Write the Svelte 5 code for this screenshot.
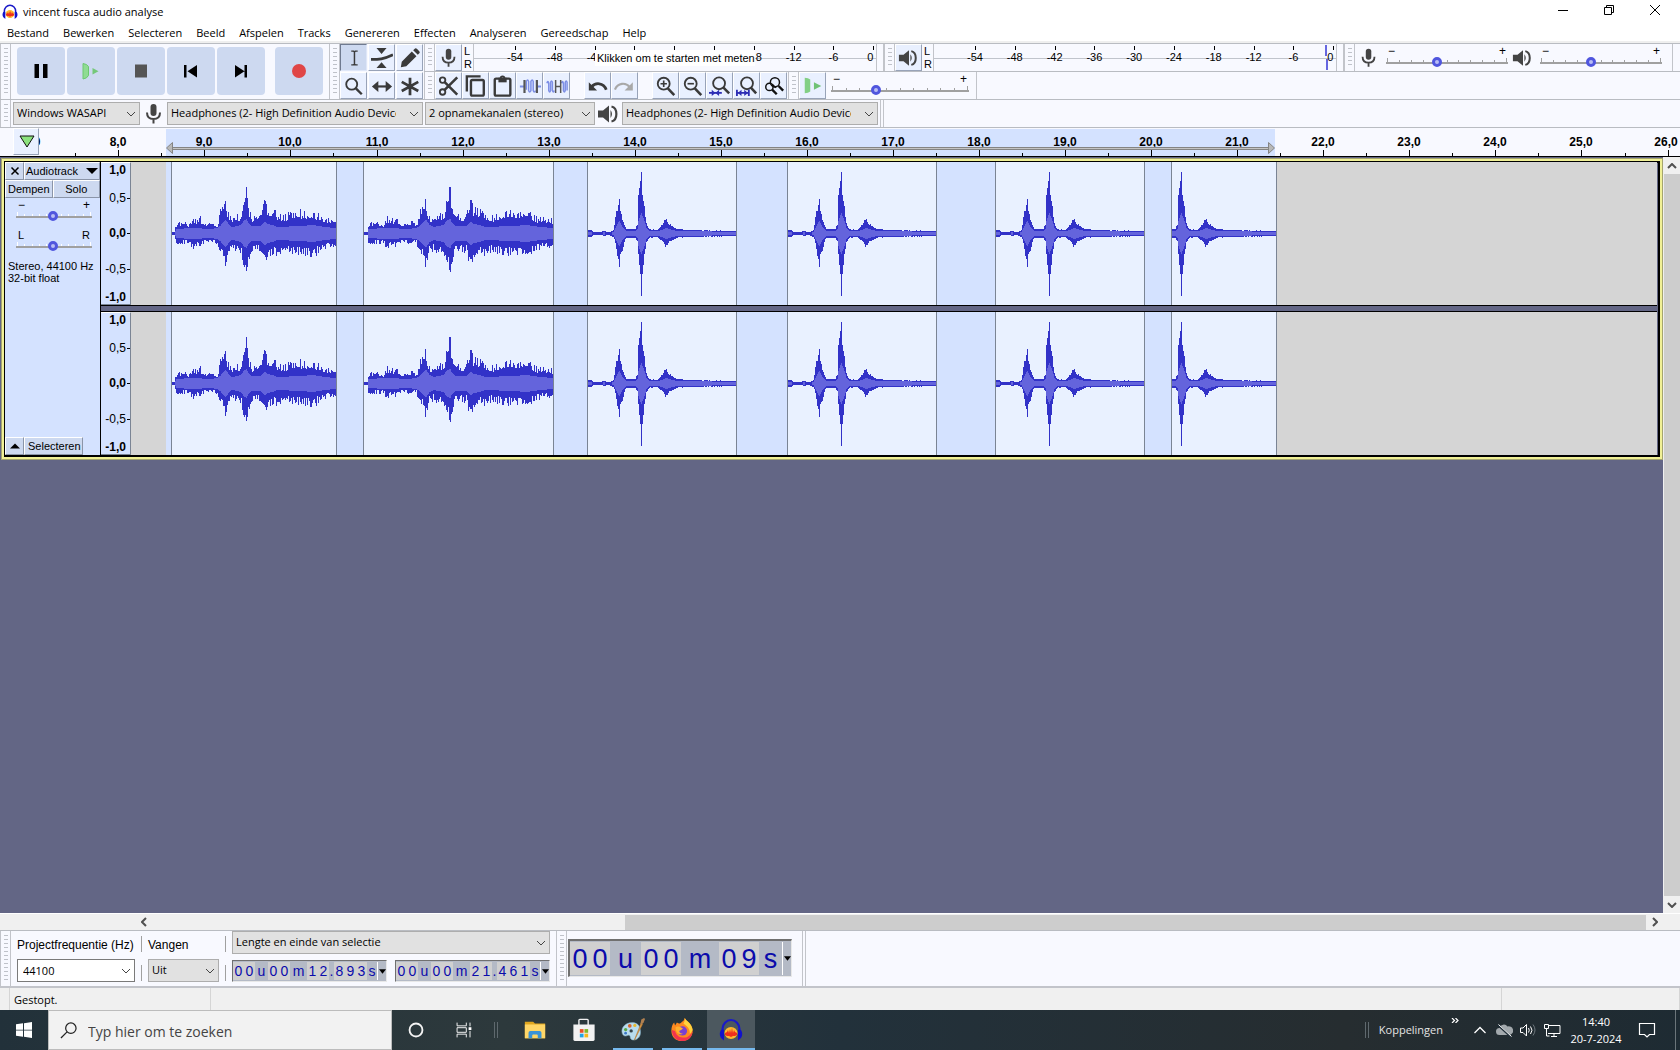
<script>
  const menus = ['Bestand', 'Bewerken', 'Selecteren', 'Beeld', 'Afspelen', 'Tracks', 'Genereren', 'Effecten', 'Analyseren', 'Gereedschap', 'Help'];

  const tools = [
    ['Selectie', 'ibeam'], ['Envelop', 'envelope'], ['Tekenen', 'pencil'],
    ['Zoomen', 'lens'], ['Verschuiven', 'shift'], ['Multi', 'star']
  ];
  const editGroups = [
    [['Knippen', 'cut'], ['Kopiëren', 'copy'], ['Plakken', 'paste'], ['Bijsnijden', 'trim'], ['Stilte', 'silence']],
    [['Ongedaan maken', 'undo'], ['Opnieuw', 'redo']],
    [['Inzoomen', 'zoomin'], ['Uitzoomen', 'zoomout'], ['Selectie passend', 'fitsel'], ['Project passend', 'fitproj'], ['Zoom wisselen', 'toggle']]
  ];
  const transport = [['Pauze', 'pause'], ['Afspelen', 'play'], ['Stop', 'stop'], ['Naar begin', 'start'], ['Naar einde', 'end'], ['Opnemen', 'record']];

  const playLabels = ['-54', '-48', '-42', '-36', '-30', '-24', '-18', '-12', '-6', '0'];
  // Labels behind the hint are left out; those at its edges show only in part
  const recordLabels = ['-54', '-48', '-4', '', '', '', '8', '-12', '-6', '0'];
  const shift = { '-4': -3, '8': 5, '0': -3 };

  // Time axis: pixels per second and the x of 8,0 s relative to the ruler's left edge
  const perSecond = 86.07;
  const at = (s) => Math.round(79.3 + (s - 8) * perSecond);
  const seconds = Array.from({ length: 20 }, (_, i) => i + 7);
  const fmt = (n) => n.toFixed(1).replace('.', ',');

  // Envelope points: x, peak up, peak down, rms
  const music = [
    [0, 1, 1, 0], [4, 1, 1, 0], [5, 7, 7, 4], [8, 9, 9, 4], [20, 8, 8, 5], [24, 14, 13, 5], [28, 11, 10, 5], [33, 14, 12, 5],
    [38, 8, 8, 4], [45, 11, 8, 4], [53, 8, 8, 5], [56, 18, 16, 7], [59, 24, 20, 10], [61, 29, 26, 12], [62, 34, 33, 13], [63, 24, 28, 13],
    [66, 16, 17, 8], [70, 15, 14, 6], [76, 18, 16, 7], [80, 15, 16, 8], [83, 30, 30, 12], [85, 32, 28, 13], [86, 46, 36, 14], [87, 46, 38, 14],
    [88, 24, 28, 11], [92, 15, 16, 7], [103, 16, 15, 7], [105, 22, 24, 9], [107, 33, 25, 11], [108, 33, 25, 11], [110, 21, 24, 9], [116, 21, 17, 8],
    [122, 18, 19, 6], [128, 14, 15, 6], [143, 21, 18, 7], [150, 18, 17, 7], [163, 20, 20, 8], [170, 16, 16, 7], [176, 13, 13, 6], [190, 13, 12, 5]
  ];
  const knock = [
    [0, 3, 3, 1], [4, 3, 3, 1], [6, 1, 1, 0], [14, 1, 1, 0], [16, 2, 2, 1], [22, 1, 1, 0], [26, 3, 3, 1], [28, 15, 9, 5], [30, 24, 22, 9],
    [32, 34, 33, 12], [33, 22, 22, 10], [35, 15, 19, 6], [37, 8, 8, 4], [39, 4, 4, 2], [48, 4, 4, 2], [50, 8, 8, 4], [51, 38, 22, 12],
    [53, 52, 40, 18], [54, 61, 62, 20], [55, 38, 40, 17], [57, 25, 21, 12], [59, 10, 9, 5], [62, 4, 4, 2], [70, 3, 3, 2], [75, 9, 7, 3],
    [78, 14, 12, 5], [82, 9, 8, 4], [89, 4, 4, 2], [100, 3, 3, 2], [149, 2, 2, 1]
  ];
  const clips = [
    { x: 40, w: 165, shape: music, scale: 190 / 165, from: 0, noise: 0.55 },
    { x: 232, w: 190, shape: music, scale: 1, from: 0, noise: 0.55 },
    { x: 456, w: 149, shape: knock, scale: 1, from: 0, noise: 0.25 },
    { x: 656, w: 149, shape: knock, scale: 1, from: 0, noise: 0.25 },
    { x: 864, w: 149, shape: knock, scale: 1, from: 0, noise: 0.25 },
    { x: 1040, w: 105, shape: knock, scale: 1, from: 44, noise: 0.25 }
  ];

  function sample(shape, x) {
    let i = 1;
    while (i < shape.length - 1 && shape[i][0] < x) i++;
    const a = shape[i - 1], b = shape[i];
    const t = Math.max(0, Math.min(1, (x - a[0]) / (b[0] - a[0])));
    return [1, 2, 3].map((k) => a[k] + (b[k] - a[k]) * t);
  }
  const hash = (n) => {
    const v = Math.sin(n * 127.1 + 11.7) * 43758.5453;
    return v - Math.floor(v);
  };
  function bars(clip, rms) {
    const mid = 71;
    let d = '';
    for (let i = 0; i < clip.w; i++) {
      const x = i + clip.from;
      const [up, down, r] = sample(clip.shape, x * clip.scale);
      const jitter = (v, seed) => (v > 30 ? v : v + (hash(seed) ** 1.5 - 0.5) * clip.noise * Math.min(v, 18));
      const top = Math.round(rms ? r : jitter(up, x));
      const low = Math.round(rms ? r : jitter(down, x + 500));
      if (rms && r < 0.7) continue;
      d += `M${clip.x + i} ${mid - top}h1v${top + low + 1}h-1z`;
    }
    return d;
  }
  const waves = clips.map((c) => ({ ...c, peak: bars(c, false), rms: bars(c, true) }));

  const levels = [['1,0', true], ['0,5', false], ['0,0', true], ['-0,5', false], ['-1,0', true]];
</script>

{#snippet logo()}
  <svg class="logo" viewBox="0 0 24 24" aria-hidden="true">
    <ellipse cx="12" cy="15" rx="6.500" ry="6" fill="#ffb92e" />
    <path d="M6 15l2-1 1-2 1 3 1-4 1 4 1-5 1 5 1-3 1 2 2 1v2l-2 1-2 0-2 1-2-1-2 0-2-1z" fill="#f0301c" />
    <path d="M3.500 15V11a8.500 9 0 0 1 17 0v4" fill="none" stroke="#1a1ac8" stroke-width="2.200" />
    <path d="M2 12q-2.500 4 0 8l3 2.500v-11zM22 12q2.500 4 0 8l-3 2.500v-11z" fill="#1212cc" />
  </svg>
{/snippet}

{#snippet mic()}
  <svg class="glyph" viewBox="0 0 24 24" aria-hidden="true">
    <rect x="8.500" y="2" width="6" height="12" rx="3" fill="#444" />
    <path d="M5 10.500c0 4.500 3 6.500 6.500 6.500s6.500-2 6.500-6.500M11.500 17v4.500" fill="none" stroke="#444" stroke-width="2" />
  </svg>
{/snippet}

{#snippet speaker()}
  <svg class="glyph" viewBox="0 0 24 24" aria-hidden="true">
    <path d="M1 8.500h5l6-5v17l-6-5H1z" fill="#444" />
    <path d="M13.500 8q3 4 0 8z" fill="#444" />
    <path d="M14.500 4.500c6.500 1.500 6.500 13.500 0 15" fill="none" stroke="#444" stroke-width="2.200" />
  </svg>
{/snippet}

{#snippet icon(name)}
  <svg class="glyph" viewBox="0 0 24 24" aria-hidden="true" fill="none" stroke="#3a3a3a" stroke-width="2">
    {#if name === 'ibeam'}
      <path d="M9 4.500h2.500l1 .8 1-.8H16M12.500 5v14M9 19.500h2.500l1-.8 1 .8H16" stroke-width="1.600" />
    {:else if name === 'envelope'}
      <path d="M6 1h11l-5.500 6.500zM6 23h11l-5.500-6.500z" fill="#3a3a3a" stroke="none" />
      <path d="M0 13.500c8 0 14 0 24-5" stroke-width="3" />
    {:else if name === 'pencil'}
      <path d="M2 22l1-6L14 5l5 5L8 21zM15.500 3.500l2-2q1-.6 2 .4l2.600 2.600q1 1 .3 2L20.500 8.500z" fill="#3a3a3a" stroke="none" />
    {:else if name === 'lens'}
      <circle cx="9.500" cy="10" r="6" /><path d="M14 14.500L20.500 21" stroke-width="2.600" />
    {:else if name === 'shift'}
      <path d="M5 12.500h14" stroke-width="2.400" /><path d="M1 12.500l7-6v12zM23 12.500L16 6.500v12z" fill="#3a3a3a" stroke="none" />
    {:else if name === 'star'}
      <path d="M12 3v19M3 7.500l18 10M21 7.500l-18 10" stroke-width="3" />
    {:else if name === 'cut'}
      <circle cx="5" cy="5.500" r="3" /><circle cx="5" cy="18.500" r="3" /><path d="M7 7.500L21 21.500M7 16.500L21 2.500" stroke-width="2.800" />
    {:else if name === 'copy'}
      <rect x="6.500" y="5.500" width="14" height="17" rx="1.500" stroke-width="2.600" /><path d="M2 18V1.500h15" stroke-width="2.600" />
    {:else if name === 'paste'}
      <rect x="3" y="4" width="17" height="18.500" rx="1.500" stroke-width="2.600" /><path d="M7 3h9v5H7z" fill="#3a3a3a" stroke="none" /><circle cx="11.500" cy="3.500" r="2" />
    {:else if name === 'trim'}
      <path d="M1 12.500h5M20 12.500h4" stroke="#7d8fe6" /><path d="M8 16V7q1.500-3 2.500 0v10q1 3 2.500 0V7q1.500-3 2.500 0v10q1 3 2.500 0" stroke="#7d8fe6" stroke-width="1.600" /><path d="M6 5.500v14M19.500 5.500v14" stroke="#555" stroke-width="2.400" />
    {:else if name === 'silence'}
      <path d="M1 9q1-4 2 0v8q1 3 2 0V8q1-3 2 0v9q1 3 2 0M17 9q1-4 2 0v8q1 3 2 0V8q1-3 2 0v9" stroke="#7d8fe6" stroke-width="1.600" /><path d="M10.500 5.500v14M16 5.500v14M10.500 12.500h5.500" stroke="#555" stroke-width="1.600" />
    {:else if name === 'undo'}
      <path d="M5 13c4-5 13-5 16 3" stroke-width="3" /><path d="M2 8v9h9z" fill="#3a3a3a" stroke="none" />
    {:else if name === 'redo'}
      <path d="M17 13c-4-5-13-5-16 3" stroke="#a8a8a8" stroke-width="2.400" /><path d="M20.500 8v9h-9z" fill="#a8a8a8" stroke="none" />
    {:else if name === 'zoomin'}
      <circle cx="9.500" cy="9.500" r="6.500" /><path d="M14 14.500L21 22" stroke-width="2.800" /><path d="M6 9.500h7M9.500 6v7" stroke-width="1.800" />
    {:else if name === 'zoomout'}
      <circle cx="9.500" cy="9.500" r="6.500" /><path d="M14 14.500L21 22" stroke-width="2.800" /><path d="M6 9.500h7" stroke-width="1.800" />
    {:else if name === 'fitsel'}
      <circle cx="11" cy="9" r="6.500" /><path d="M15.500 13.500L22 20" stroke-width="2.800" /><path d="M0 19.500h14" stroke="#2d2db4" /><path d="M7 19.500L3 16v7zM7 19.500l4-3.500v7z" fill="#2d2db4" stroke="none" />
    {:else if name === 'fitproj'}
      <circle cx="12" cy="9" r="6.500" /><path d="M16 13.500L22 20" stroke-width="2.800" /><path d="M1 16v7M14 16v7M2 19.500h11" stroke="#2d2db4" /><path d="M2 19.500L6 16v7zM13 19.500L9 16v7z" fill="#2d2db4" stroke="none" />
    {:else if name === 'toggle'}
      <g stroke="#111" stroke-width="1.600"><circle cx="7" cy="13" r="4" /><circle cx="13" cy="8" r="5" /><path d="M10 16l5 5M17 12l5 5" stroke-width="2.600" /><path d="M10 10l4 4" /></g>
    {:else if name === 'smallplay'}
      <path d="M3 3q4 0 6 2v13q-2 2-6 2z" fill="#82cf85" stroke="none" /><path d="M13 8l8 4-8 4z" fill="#6fc274" stroke="none" />
    {:else if name === 'pause'}
      <path d="M5.500 5h4.500v14H5.500zM14 5h4.500v14H14z" fill="#000" stroke="none" />
    {:else if name === 'play'}
      <path d="M4 4.500q4 .5 5.500 3v9q-1.500 3-5.500 3.500z" fill="#8fdc92" stroke="#6cc870" stroke-width="1" /><path d="M13.500 9l6 3.300-6 3.300z" fill="#74c878" stroke="none" />
    {:else if name === 'stop'}
      <path d="M6 5.500h12v13H6z" fill="#555" stroke="none" />
    {:else if name === 'start'}
      <path d="M5 6h2.500v12.500H5zM18 6v12.500L8.500 12.200z" fill="#000" stroke="none" />
    {:else if name === 'end'}
      <path d="M15.500 6H18v12.500h-2.500zM6 6v12.500l9.500-6.300z" fill="#000" stroke="none" />
    {:else if name === 'record'}
      <circle cx="12" cy="12" r="7" fill="#e04646" stroke="none" />
    {/if}
  </svg>
{/snippet}

{#snippet grab()}<span class="grab"><i></i></span>{/snippet}

{#snippet slider(label, lo, hi, width, value, extra)}
  <label class="slider {extra}" style:width="{width}px" aria-label={label}>
    <span class="ends"><b>{lo}</b><b>{hi}</b></span>
    <svg class="ticks" {width} height="12" aria-hidden="true">
      <rect x="0" y="6" {width} height="2" fill="#a0a0a0" />
      {#each Array(11) as _, i}
        <rect x={Math.round(1 + (i * (width - 3)) / 10)} y={i % 10 ? 4 : 2} width="1" height={i % 10 ? 2 : 4} class="tick" />
      {/each}
    </svg>
    <input type="range" min="0" max="100" {value} aria-label={label} />
  </label>
{/snippet}

{#snippet meter(label, labels, hint, mark)}
  <span class="lr"><span>L</span><span>R</span></span>
  <div class="meter" aria-label={label}>
    <svg width="403" height="27">
      <path d="M0 14.500H403" stroke="#c0c4cc" />
      {#each labels as db, i}
        <rect x={Math.round(41 + i * 39.8)} y="2" width="1" height="4" fill="#000" />
        {#if db}<text x={41 + (shift[db] ?? 0) + i * 39.8} y="17" text-anchor="middle">{db}</text>{/if}
      {/each}
      {#if mark}
        <rect x="391" y="1" width="2" height="11" fill="#6666e0" /><rect x="392" y="15" width="2" height="11" fill="#6666e0" />
      {/if}
    </svg>
    {#if hint}<button class="hint">{hint}</button>{/if}
  </div>
  <span class="tail"></span>
{/snippet}

{#snippet drop(label, text, cls)}
  <span class="drop {cls}">
    <select aria-label={label}><option>{text}</option></select>
    <svg viewBox="0 0 10 6" aria-hidden="true"><path d="M1 1l4 4 4-4" fill="none" stroke="#444" /></svg>
  </span>
{/snippet}

{#snippet time(label, groups, cls)}
  <div class="time {cls}" role="group" aria-label={label}>
    {#each groups as g}
      {#if g.length > 1}
        <span class="digits">{#each g as d}<span>{d}</span>{/each}</span>
      {:else}
        <span class="unit unit-{g === '.' ? 'dot' : g}">{g}</span>
      {/if}
    {/each}
    <button aria-label="Notatie"><svg viewBox="0 0 8 5" aria-hidden="true"><path d="M0 0h8L4 5z" /></svg></button>
  </div>
{/snippet}

<div class="app">
  <header class="title">
    {@render logo()}
    <span class="name">vincent fusca audio analyse</span>
    <button aria-label="Minimaliseren"><svg viewBox="0 0 12 12"><path d="M1 6.500h10" /></svg></button>
    <button aria-label="Verkleinen"><svg viewBox="0 0 12 12"><path d="M1.500 3.500h7v7h-7zM3.500 3V1.500h7v7H9" /></svg></button>
    <button aria-label="Sluiten"><svg viewBox="0 0 12 12"><path d="M1 1l10 10M11 1L1 11" /></svg></button>
  </header>
  <nav class="menu">{#each menus as m}<button>{m}</button>{/each}</nav>

  <div class="dock">
    <section class="transport">
      {@render grab()}
      <div class="big">
        {#each transport as [label, name]}<button class={name} aria-label={label}>{@render icon(name)}</button>{/each}
      </div>
    </section>
    <section class="tools">
      {@render grab()}
      <div class="toolgrid">
        {#each tools as [label, name], i}<button class="tool" class:on={i === 0} aria-label={label}>{@render icon(name)}</button>{/each}
      </div>
    </section>
    <div class="rows">
      <div class="row">
        <section class="bar">
          {@render grab()}
          <button class="tool" aria-label="Opnameniveau">{@render mic()}</button>
          {@render meter('Opnamemeter', recordLabels, 'Klikken om te starten met meten', false)}
        </section>
        <section class="bar">
          {@render grab()}
          <button class="tool" aria-label="Afspeelniveau">{@render speaker()}</button>
          {@render meter('Afspeelmeter', playLabels, '', true)}
        </section>
        <section class="bar mixer">
          {@render grab()}
          {@render mic()}
          {@render slider('Opnamevolume', '−', '+', 122, 41, '')}
          {@render speaker()}
          {@render slider('Afspeelvolume', '−', '+', 122, 41, '')}
        </section>
      </div>
      <div class="row">
        <section class="bar edit">
          {@render grab()}
          {#each editGroups as group}
            <div class="group">
              {#each group as [label, name]}<button class="tool" aria-label={label}>{@render icon(name)}</button>{/each}
            </div>
          {/each}
        </section>
        <section class="bar speed">
          {@render grab()}
          <button class="tool" aria-label="Afspelen op snelheid">{@render icon('smallplay')}</button>
          {@render slider('Afspeelsnelheid', '−', '+', 138, 31, '')}
        </section>
      </div>
    </div>
  </div>

  <div class="row devices">
    {@render grab()}
    {@render drop('Audiohost', 'Windows WASAPI', 'host')}
    {@render mic()}
    {@render drop('Opnameapparaat', 'Headphones (2- High Definition Audio Device)', 'device')}
    {@render drop('Opnamekanalen', '2 opnamekanalen (stereo)', 'channels')}
    {@render speaker()}
    {@render drop('Afspeelapparaat', 'Headphones (2- High Definition Audio Device)', 'device')}
    <span class="tail short"></span>
  </div>

  <div class="timeline">
    <button class="pin" aria-label="Vastgezette kop">
      <svg viewBox="0 0 16 13" aria-hidden="true"><path d="M1 1h14L8 12z" fill="#8be27e" stroke="#111" /></svg>
    </button>
    <svg class="ruler" height="28">
      <rect x="127" y="1" width="1109" height="27" fill="#d4e2ff" />
      {#each seconds as s}
        <rect x={at(s)} y="22" width="1" height="6" />
        <rect x={at(s + 0.5)} y="25" width="1" height="3" />
        <text x={s === 26 ? at(s) - 2 : at(s)} y="18" text-anchor="middle">{fmt(s)}</text>
      {/each}
      <path d="M132 19.500H1231M132 21.500H1231" stroke="#848484" />
      <path d="M132 20.500H1231" stroke="#c4c4c4" />
      <path d="M133.500 14.500v11l-6-5.500zM1229.500 14.500v11l6-5.500z" fill="#b8b8b8" stroke="#848484" />
    </svg>
  </div>

  <main class="workspace">
    <div class="canvas">
      <article class="track">
        <aside class="panel">
          <div class="pair head">
            <button class="x" aria-label="Track sluiten"><svg viewBox="0 0 10 10"><path d="M1.500 1.500l7 7M8.500 1.500l-7 7" /></svg></button>
            <button class="trackname">Audiotrack <svg viewBox="0 0 12 6" aria-hidden="true"><path d="M0 0h12L6 6z" /></svg></button>
          </div>
          <div class="pair mute"><button>Dempen</button><button>Solo</button></div>
          {@render slider('Versterking', '−', '+', 76, 48, 'light')}
          {@render slider('Balans', 'L', 'R', 76, 48, 'light pan')}
          <p>Stereo, 44100 Hz<br />32-bit float</p>
          <div class="foot">
            <button class="x" aria-label="Inklappen"><svg viewBox="0 0 12 6"><path d="M0 6h12L6 0z" class="solid" /></svg></button>
            <button class="select">Selecteren</button>
          </div>
        </aside>
        <div class="channels2">
          {#each [0, 1] as ch}
            <div class="channel">
              <div class="scale">{#each levels as [t, strong]}<span class:strong>{t}</span>{/each}</div>
              <svg class="wave" height="143" shape-rendering="crispEdges" aria-label="Golfvorm kanaal {ch + 1}">
                <rect x="35" y="0" width="1110" height="143" fill="#d4e2ff" />
                {#each waves as c}
                  <rect x={c.x} y="0" width={c.w + 1} height="143" fill="#e9f1ff" />
                  <path d={c.peak} fill="#3232c8" />
                  <path d={c.rms} fill="#6464dc" />
                  <rect x={c.x} y="0" width="1" height="143" fill="#7a8494" />
                  <rect x={c.x + c.w} y="0" width="1" height="143" fill="#7a8494" />
                {/each}
              </svg>
            </div>
          {/each}
        </div>
      </article>
    </div>
    <div class="vscroll">
      <button aria-label="Omhoog"><svg viewBox="0 0 10 6"><path d="M1 5l4-4 4 4" /></svg></button>
      <span class="thumb"></span>
      <button aria-label="Omlaag"><svg viewBox="0 0 10 6"><path d="M1 1l4 4 4-4" /></svg></button>
    </div>
  </main>
  <div class="hscroll">
    <button aria-label="Naar links"><svg viewBox="0 0 6 10"><path d="M5 1L1 5l4 4" /></svg></button>
    <span class="space"></span><span class="thumb"></span>
    <button aria-label="Naar rechts"><svg viewBox="0 0 6 10"><path d="M1 1l4 4-4 4" /></svg></button>
  </div>

  <div class="bottom">
    <section class="selection">
      {@render grab()}
      <div class="cols">
        <div class="col rate">
          <label for="rate">Projectfrequentie (Hz)</label>
          <span class="drop combo"><input id="rate" value="44100" /><svg viewBox="0 0 10 6" aria-hidden="true"><path d="M1 1l4 4 4-4" fill="none" stroke="#444" /></svg></span>
        </div>
        <div class="col seps"><i></i><i></i></div>
        <div class="col snap">
          <label for="snap">Vangen</label>
          <span class="drop"><select id="snap"><option>Uit</option></select><svg viewBox="0 0 10 6" aria-hidden="true"><path d="M1 1l4 4 4-4" fill="none" stroke="#444" /></svg></span>
        </div>
        <div class="col seps"><i></i><i></i></div>
        <div class="col range">
          {@render drop('Selectietype', 'Lengte en einde van selectie', '')}
          <div class="times">
            {@render time('Lengte', ['00', 'u', '00', 'm', '12', '.', '893', 's'], '')}
            {@render time('Einde', ['00', 'u', '00', 'm', '21', '.', '461', 's'], '')}
          </div>
        </div>
      </div>
    </section>
    <section class="clock">
      {@render grab()}
      {@render time('Audiopositie', ['00', 'u', '00', 'm', '09', 's'], 'large')}
    </section>
    <span class="edge"></span>
  </div>
  <footer class="status"><span></span><span>Gestopt.</span><span></span><span></span></footer>

  <div class="taskbar">
    <button class="start" aria-label="Start"><svg viewBox="0 0 16 16"><path d="M0 2.300l7-1v6.400H0zM8 1.200L16 0v7.700H8zM0 8.500h7v6.300l-7-1zM8 8.500h8V16l-8-1.200z" fill="#fff" /></svg></button>
    <label class="search">
      <svg viewBox="0 0 18 18" aria-hidden="true"><circle cx="11.500" cy="6.500" r="5.500" /><path d="M7.500 10.500L1 17" /></svg>
      <input placeholder="Typ hier om te zoeken" aria-label="Typ hier om te zoeken" />
    </label>
    <button class="app-btn" aria-label="Cortana"><svg viewBox="0 0 26 26"><circle cx="13" cy="13" r="7" fill="none" stroke="#f4f4f4" stroke-width="2" /></svg></button>
    <button class="app-btn" aria-label="Taakweergave"><svg viewBox="0 0 26 26" fill="none" stroke="#fff"><path d="M5.500 5v3.500h10V5M5.500 21v-3.500h10V21M5.500 10.500h10v5h-10zM19.500 5v4M19.500 14v7" /><rect x="18" y="10" width="3" height="3" fill="#fff" stroke="none" /></svg></button>
    <span class="divider"></span>
    <div class="apps">
      <button class="app-btn" aria-label="Verkenner"><svg viewBox="0 0 26 26"><path d="M2 4h9l2 2h11v16H2z" fill="#e0a61e" /><path d="M2 7h22v15H2z" fill="#ffd667" /><path d="M6 22v-6q0-2 2-2h10q2 0 2 2v6h-4v-3q0-1-1-1h-4q-1 0-1 1v3z" fill="#3a93d8" /></svg></button>
      <button class="app-btn" aria-label="Store"><svg viewBox="0 0 26 26"><path d="M7.500 8V2.500q0-1 1-1h8q1 0 1 1V8" fill="none" stroke="#f2f2f2" stroke-width="1.500" /><path d="M1.500 7h23v16q0 2-2 2h-19q-2 0-2-2z" fill="#f2f2f2" /><path d="M8.500 12h4v4h-4z" fill="#e8502a" /><path d="M13.500 12h4v4h-4z" fill="#7fb82c" /><path d="M8.500 17h4v4h-4z" fill="#22a3e6" /><path d="M13.500 17h4v4h-4z" fill="#f8b81c" /></svg></button>
      <button class="app-btn open" aria-label="Paint"><svg viewBox="0 0 26 26"><path d="M12 5C5 5 .5 10 1 15c.5 5 4 5 6 4 2-1 3 0 3 2 .5 3 4 3.500 7 2 4-2 5-7 3.500-11.500C20 7 16 5 12 5z" fill="#b9dcee" stroke="#7fa9c0" stroke-width=".6" /><circle cx="5" cy="12.500" r="1.800" fill="#5aa845" /><circle cx="9.500" cy="8.500" r="2" fill="#d8622c" /><circle cx="15" cy="8" r="1.800" fill="#e5b930" /><circle cx="5" cy="16.500" r="1.500" fill="#3a78c8" /><circle cx="11" cy="14" r="1.800" fill="#33424a" /><path d="M14.500 24L21.500 6l1.800.8z" fill="#d89a4c" stroke="#b57428" stroke-width=".6" /><path d="M21 6.500l1-5 3-1.500 1 1-1.500 4-2 2z" fill="#b08050" /></svg></button>
      <button class="app-btn open" aria-label="Firefox"><svg viewBox="0 0 26 26"><path d="M13 4c3-1 2-3 3-4 1 3 8 6 8.500 13C25 20 20 25 13 25S1.500 20 1.500 14c0-4 1-7 3-9l1 3 2-3c1 0 2 3 5.500-1z" fill="#ff8a1e" /><path d="M2 13c0 7 5 12 11 12 7 0 11-5 11.500-11-2 5-6 8-11 7-4 0-7-3-8-7z" fill="#f2344e" /><path d="M16 0c1 3 8 6 8.500 13-1 2-2 4-3 4 0-6-3-8-7-11 1-1 2-4 1.500-6z" fill="#ffd23c" /><circle cx="13.500" cy="14" r="5" fill="#7a3fd0" /><path d="M6 10c3-2 5 0 8 1-1 2-3 2-4 3 0 2 2 3 4 3-4 2-8-1-8-7z" fill="#ffb02e" /></svg></button>
      <button class="app-btn open active" aria-label="Audacity">{@render logo()}</button>
    </div>
    <span class="grow"></span>
    <span class="divider"></span>
    <span class="links">Koppelingen</span>
    <svg class="more" viewBox="0 0 8 5" aria-hidden="true"><path d="M1 0l2.500 2.500L1 5M4.500 0L7 2.500 4.500 5" fill="none" stroke="#fff" stroke-width="1.200" /></svg>
    <svg class="tray" viewBox="0 0 18 18" aria-hidden="true"><path d="M3.500 12L9 6.500l5.500 5.500" fill="none" stroke="#fff" stroke-width="1.300" /></svg>
    <svg class="tray" viewBox="0 0 18 18" aria-hidden="true"><path d="M4.500 14a3.500 3.500 0 0 1 0-7 4.500 4.500 0 0 1 8-1.500 4 4 0 0 1 2.500 8.500z" fill="#a3a9ad" /><path d="M3 4l13 12" stroke="#22303a" stroke-width="2" /><path d="M3.500 3.500l13 12" stroke="#fff" /></svg>
    <svg class="tray" viewBox="0 0 18 18" aria-hidden="true" fill="none" stroke="#fff"><path d="M1.500 7v4.500h2.500l3.500 3.500V3.500L4 7z" /><path d="M9.500 7q1.500 2.300 0 4.500M11.500 5.500q3 3.700 0 7.500" /><path d="M14 3.500q4 5.500 0 11" stroke="#6d767c" /></svg>
    <svg class="tray" viewBox="0 0 18 18" aria-hidden="true" fill="none" stroke="#fff"><path d="M6 4.500h11v8H5M1.500 3.500h4v4h-4zM3.500 8v7h3M8 15.500h6M11 13v2" /></svg>
    <span class="now"><time>14:40</time><time>20-7-2024</time></span>
    <button class="note" aria-label="Meldingen"><svg viewBox="0 0 18 18"><path d="M1.500 2.500h15v11h-5L9 16l-2.500-2.500h-5z" fill="none" stroke="#fff" stroke-width="1.200" /></svg></button>
    <span class="peek"></span>
  </div>
</div>

<style>
  :global(body) { margin: 0; }
  .app {
    display: flex; flex-direction: column; height: 100vh; min-height: 640px; overflow: hidden;
    background: #fff; color: #000; font: 11px/16px "Open Sans", "Noto Sans", sans-serif;
  }
  .app :global(*) { box-sizing: border-box; }
  button, select, input { font: inherit; color: inherit; margin: 0; padding: 0; border: 0; background: none; border-radius: 0; }
  svg { display: block; flex: none; }
  section { display: flex; }

  .title { display: flex; align-items: center; height: 23px; padding: 0 2px; }
  .logo { width: 16px; height: 16px; }
  .name { flex: 1; padding-left: 5px; }
  .title button { width: 46px; height: 20px; display: grid; place-items: center; align-self: start; }
  .title button svg { width: 12px; height: 12px; fill: none; stroke: #000; }
  .menu { display: flex; gap: 14px; height: 20px; padding: 2px 7px 0; border-bottom: 2px solid #efefef; }
  .menu button { height: 16px; white-space: nowrap; }

  .dock { display: flex; border-top: 1px solid #b9bcc2; background: #f8f9ff; }
  .grab { flex: none; width: 11px; display: flex; justify-content: center; padding: 4px 0; border: solid #c2c4ca; border-width: 0 1px; align-self: stretch; }
  .grab i { width: 4px; background: repeating-linear-gradient(#bfc2c9 0 1px, transparent 1px 4px); }
  .transport { border-bottom: 1px solid #b9bcc2; }
  .big { display: flex; gap: 2px; padding: 3px 6px; }
  .big button { width: 48px; height: 48px; border-radius: 4px; background: #cdd9f0; display: grid; place-items: center; }
  .big .record { margin-left: 8px; }
  .tools { border-bottom: 1px solid #b9bcc2; }
  .toolgrid { display: grid; grid-template-columns: repeat(3, 27px); gap: 1px; padding-right: 1px; }
  .glyph { width: 24px; height: 24px; }
  .tool .glyph { width: 22px; height: 22px; }
  .tool { flex: none; width: 27px; height: 27px; display: grid; place-items: center; background: #e9f0ff; border: 1px solid; border-color: #fff #98a3b8 #98a3b8 #fff; }
  .tool.on { background: #cdd9f0; border-color: #6f7a90 #dfe7f8 #dfe7f8 #6f7a90; }
  .big .glyph { width: 24px; height: 24px; }
  .rows { flex: 1; min-width: 0; }
  .row { display: flex; height: 28px; border-bottom: 1px solid #b9bcc2; background: #f8f9ff; }
  .bar { flex: none; align-items: center; }
  .lr { width: 11px; padding-left: 2px; display: flex; flex-direction: column; font: 11px/13px "Liberation Sans", sans-serif; }
  .meter { display: grid; border-left: 1px solid #c2c4ca; height: 27px; width: 403px; align-items: center; overflow: hidden; }
  .meter svg, .meter .hint { grid-area: 1 / 1; }
  .meter text { font: 11px "Liberation Sans", sans-serif; }
  .hint { justify-self: start; margin-left: 121px; padding: 1px 0 0 2px; background: #fff; font: 11px/15px "Liberation Sans", sans-serif; white-space: nowrap; }
  .tail { width: 8px; height: 27px; border: solid #c2c4ca; border-width: 0 1px; margin: 0; }
  .mixer { border-right: 1px solid #c2c4ca; padding-right: 9px; }
  .mixer > :global(.glyph) { width: 22px; margin: 0 5px 0 3px; }
  .slider { display: grid; grid-template-columns: 1fr; grid-template-rows: 11px 12px; align-content: center; margin-bottom: 3px; }
  .mixer .slider { margin-right: 1px; margin-left: 1px; }
  .ends { display: flex; justify-content: space-between; padding: 0 2px; font: 12px/12px "Liberation Sans", sans-serif; }
  .ends b { font-weight: 400; }
  .ticks, .slider input { grid-area: 2 / 1; }
  .tick { fill: #a0a0a0; }
  .slider input { appearance: none; width: 100%; height: 12px; z-index: 1; }
  .slider input::-webkit-slider-thumb { appearance: none; width: 10px; height: 10px; border-radius: 50%; background: #b9bdf4; border: 3px solid #5056de; }
  .light .tick { fill: #fff; }
  .group { display: flex; padding-right: 14px; }
  .group:last-child { padding-right: 1px; }
  .speed { border-right: 1px solid #c2c4ca; padding-right: 7px; }
  .speed .slider { margin-left: 5px; }

  .devices { align-items: center; }
  .drop { display: grid; align-items: center; height: 23px; min-width: 0; }
  .drop select, .drop input { grid-area: 1 / 1; appearance: none; width: 100%; height: 23px; padding: 0 20px 1px 3px; border: 1px solid #adadad; background: #e1e1e1; text-overflow: clip; overflow: hidden; }
  .drop svg { grid-area: 1 / 1; justify-self: end; width: 10px; height: 6px; margin-right: 4px; pointer-events: none; }
  .drop.host { width: 127px; margin: 0 2px; }
  .drop.device { width: 256px; margin-left: 1px; }
  .drop.device select { padding-right: 26px; }
  .drop.channels { width: 170px; margin: 0 2px; }
  .tail.short { width: 4px; margin-left: 2px; }

  .timeline { display: flex; height: 29px; border-bottom: 1px solid #000; background: #f8f9ff; padding-left: 13px; }
  .pin { flex: none; width: 26px; height: 27px; display: grid; place-items: center; background: #e9f0ff; border: 1px solid; border-color: #fff #98a3b8 #98a3b8 #fff; }
  .pin svg { width: 16px; height: 13px; margin-left: 2px; }
  .ruler { flex: 1; min-width: 0; width: 100%; }
  .ruler text { font: bold 12px "Liberation Sans", sans-serif; }

  .workspace { flex: 1; display: flex; min-height: 0; }
  .canvas { flex: 1; min-width: 0; background: #636685; padding: 1px 0 0 1px; }
  .track { display: flex; border: 1px solid #a5a56f; box-shadow: inset 0 0 0 2px #f0f096, inset 0 0 0 4px #000; padding: 3px 5px 4px 3px; font: 11px/12px "Liberation Sans", sans-serif; height: 302px; }
  .panel { flex: none; width: 96px; background: #d4e2ff; display: flex; flex-direction: column; border-right: 1px solid #000; }
  .panel button { height: 18px; background: #cdd9f0; border: 1px solid; border-color: #fff #8b95a8 #8b95a8 #fff; display: flex; align-items: center; justify-content: center; white-space: nowrap; }
  .pair { display: flex; }
  .panel .x { width: 19px; flex: none; }
  .x svg { width: 10px; height: 10px; fill: none; stroke: #000; stroke-width: 1.500; }
  .x .solid { fill: #000; stroke: none; }
  .panel .trackname { flex: 1; justify-content: space-between; padding: 0 1px 0 1px; }
  .trackname svg { width: 12px; height: 6px; }
  .mute button { flex: 1; }
  .panel .slider { margin: 1px 0 0 11px; }
  .panel .pan { margin-top: 7px; }
  .pan .ends { font-size: 11px; }
  .panel p { margin: 8px 0 0 3px; white-space: nowrap; }
  .foot { display: flex; margin-top: auto; }
  .foot .select { padding: 0 1px 0 3px; }
  .channels2 { flex: 1; min-width: 0; display: flex; flex-direction: column; justify-content: space-between; background: linear-gradient(#000, #000) 0 143px / 100% 1px no-repeat, linear-gradient(#000, #000) 0 149px / 100% 1px no-repeat, #636685; }
  .channel { display: flex; height: 143px; }
  .scale {
    flex: none; width: 30px; border: solid; border-width: 1px 1px 1px 0; border-color: #fff #7a8494 #7a8494;
    display: grid; grid-template-rows: 13px 44px 26px 45px 11px; align-items: center; padding-right: 4px;
    font: 12px/14px "Liberation Sans", sans-serif; text-align: right;
    background:
      linear-gradient(#000, #000) right 35px / 3px 1px no-repeat,
      linear-gradient(#000, #000) right 70px / 3px 1px no-repeat,
      linear-gradient(#000, #000) right 106px / 3px 1px no-repeat,
      #d4e2ff;
    background-position: right 35px, right 70px, right 106px, 0 0;
  }
  .strong { font-weight: 700; }
  .wave { flex: 1; min-width: 0; width: 100%; background: #d5d5d5; }

  .vscroll { flex: none; width: 17px; display: flex; flex-direction: column; background: #f0f0f0; }
  .vscroll button, .hscroll button { width: 17px; height: 17px; display: grid; place-items: center; }
  .vscroll svg { width: 10px; height: 6px; fill: none; stroke: #505050; stroke-width: 2; }
  .vscroll .thumb { flex: 1; margin-left: 1px; background: #cdcdcd; }
  .hscroll { flex: none; display: flex; align-items: center; height: 18px; background: #f0f0f0; padding: 0 17px 0 135px; border-top: 1px solid #fff; border-bottom: 1px solid #b9bcc2; }
  .hscroll svg { width: 6px; height: 10px; fill: none; stroke: #505050; stroke-width: 2; }
  .hscroll .space { flex: 473; }
  .hscroll .thumb { flex: 1021; height: 15px; background: #cdcdcd; }

  .bottom { flex: none; display: flex; background: #f8f9ff; border-bottom: 2px solid #c2c4ca; }
  .cols { display: flex; padding: 0 6px; }
  .col { display: flex; flex-direction: column; justify-content: space-between; padding-bottom: 4px; }
  .col label { font: 12px/16px "Liberation Sans", sans-serif; padding-top: 6px; white-space: nowrap; }
  .rate { width: 118px; }
  .snap { width: 71px; }
  .seps { width: 13px; align-items: center; padding: 5px 0 5px; }
  .seps i { width: 1px; height: 16px; background: #a0a0a0; }
  .bottom .drop input { background: #fff; border-color: #7a7a7a; padding-left: 5px; }
  .range { width: 318px; gap: 6px; }
  .times { display: flex; justify-content: space-between; }
  .time { display: flex; align-items: stretch; height: 22px; padding: 1px 0; background: #b4bac6; border: 1px solid; border-color: #707070 #e8e8e8 #e8e8e8 #707070; color: #0b0bab; font: 14px/19px "Liberation Sans", sans-serif; }
  .digits { display: flex; background: #d0d0d0; }
  .digits span { width: 11px; text-align: center; }
  .unit { text-align: center; width: 13px; }
  .unit-m { width: 17px; }
  .unit-dot { width: 5px; }
  .unit-s { width: 10px; }
  .time button { width: 9px; border-left: 1px solid #fff; display: grid; place-items: center; }
  .time button svg { width: 7px; height: 5px; fill: #000; }
  .large { align-self: center; margin: 0 10px 2px 1px; height: 38px; font-size: 27px; line-height: 35px; border-width: 2px 1px 1px 2px; }
  .large .digits span { width: 20px; }
  .large .unit { width: 31px; }
  .large .unit-m { width: 38px; }
  .large .unit-s { width: 23px; }
  .clock { border-right: 1px solid #c2c4ca; }
  .edge { width: 3px; border-right: 1px solid #c2c4ca; }

  .status { flex: none; display: flex; height: 22px; background: #f0f0f0; line-height: 24px; }
  .status span { border-right: 1px solid #d5d5d5; }
  .status span:nth-child(1) { width: 10px; }
  .status span:nth-child(2) { width: 201px; padding-left: 4px; }
  .status span:nth-child(3) { flex: 1; }
  .status span:nth-child(4) { width: 178px; }

  .taskbar { flex: none; display: flex; align-items: center; height: 40px; background: linear-gradient(90deg, #22313a, #2d393c 30%, #22313b 50%, #262d30 80%, #1e2b33); color: #fff; }
  .start { width: 48px; height: 40px; display: grid; place-items: center; }
  .start svg { width: 16px; height: 16px; }
  .search { display: flex; align-items: center; width: 344px; height: 40px; padding-left: 11px; background: #f2f2f2; border: 1px solid #bcbcbc; color: #444; }
  .search svg { width: 17px; height: 17px; fill: none; stroke: #222; stroke-width: 1.300; }
  .search input { flex: 1; min-width: 0; height: 22px; padding: 2px 0 0 11px; font-size: 14px; }
  .search input::placeholder { color: #444; opacity: 1; }
  .app-btn { flex: none; width: 48px; height: 40px; display: grid; place-items: center; border: solid transparent; border-width: 2px 0; }
  .app-btn svg, .app-btn :global(.logo) { width: 24px; height: 24px; }
  .apps { display: flex; gap: 1px; margin-left: 3px; }
  .open { background: linear-gradient(#76b9ed, #76b9ed) center bottom / 40px 2px no-repeat border-box; }
  .active { background: linear-gradient(#76b9ed, #76b9ed) bottom / 100% 2px no-repeat border-box, #4c585f border-box; }
  .divider { flex: none; width: 4px; height: 16px; margin: 0 10px 0 6px; border: solid #5f696e; border-width: 0 1px; }
  .grow { flex: 1; }
  .links { font-size: 11px; color: #e4e4e4; }
  .more { width: 8px; height: 5px; margin: 0 12px 20px 8px; }
  .tray { width: 18px; height: 18px; margin-right: 6px; }
  .now { display: flex; flex-direction: column; align-items: center; width: 58px; font-size: 11px; line-height: 17px; }
  .note { width: 44px; height: 40px; display: grid; place-items: center; }
  .note svg { width: 18px; height: 18px; }
  .peek { width: 5px; height: 40px; border-left: 1px solid #6b757a; margin-left: 6px; }
</style>
